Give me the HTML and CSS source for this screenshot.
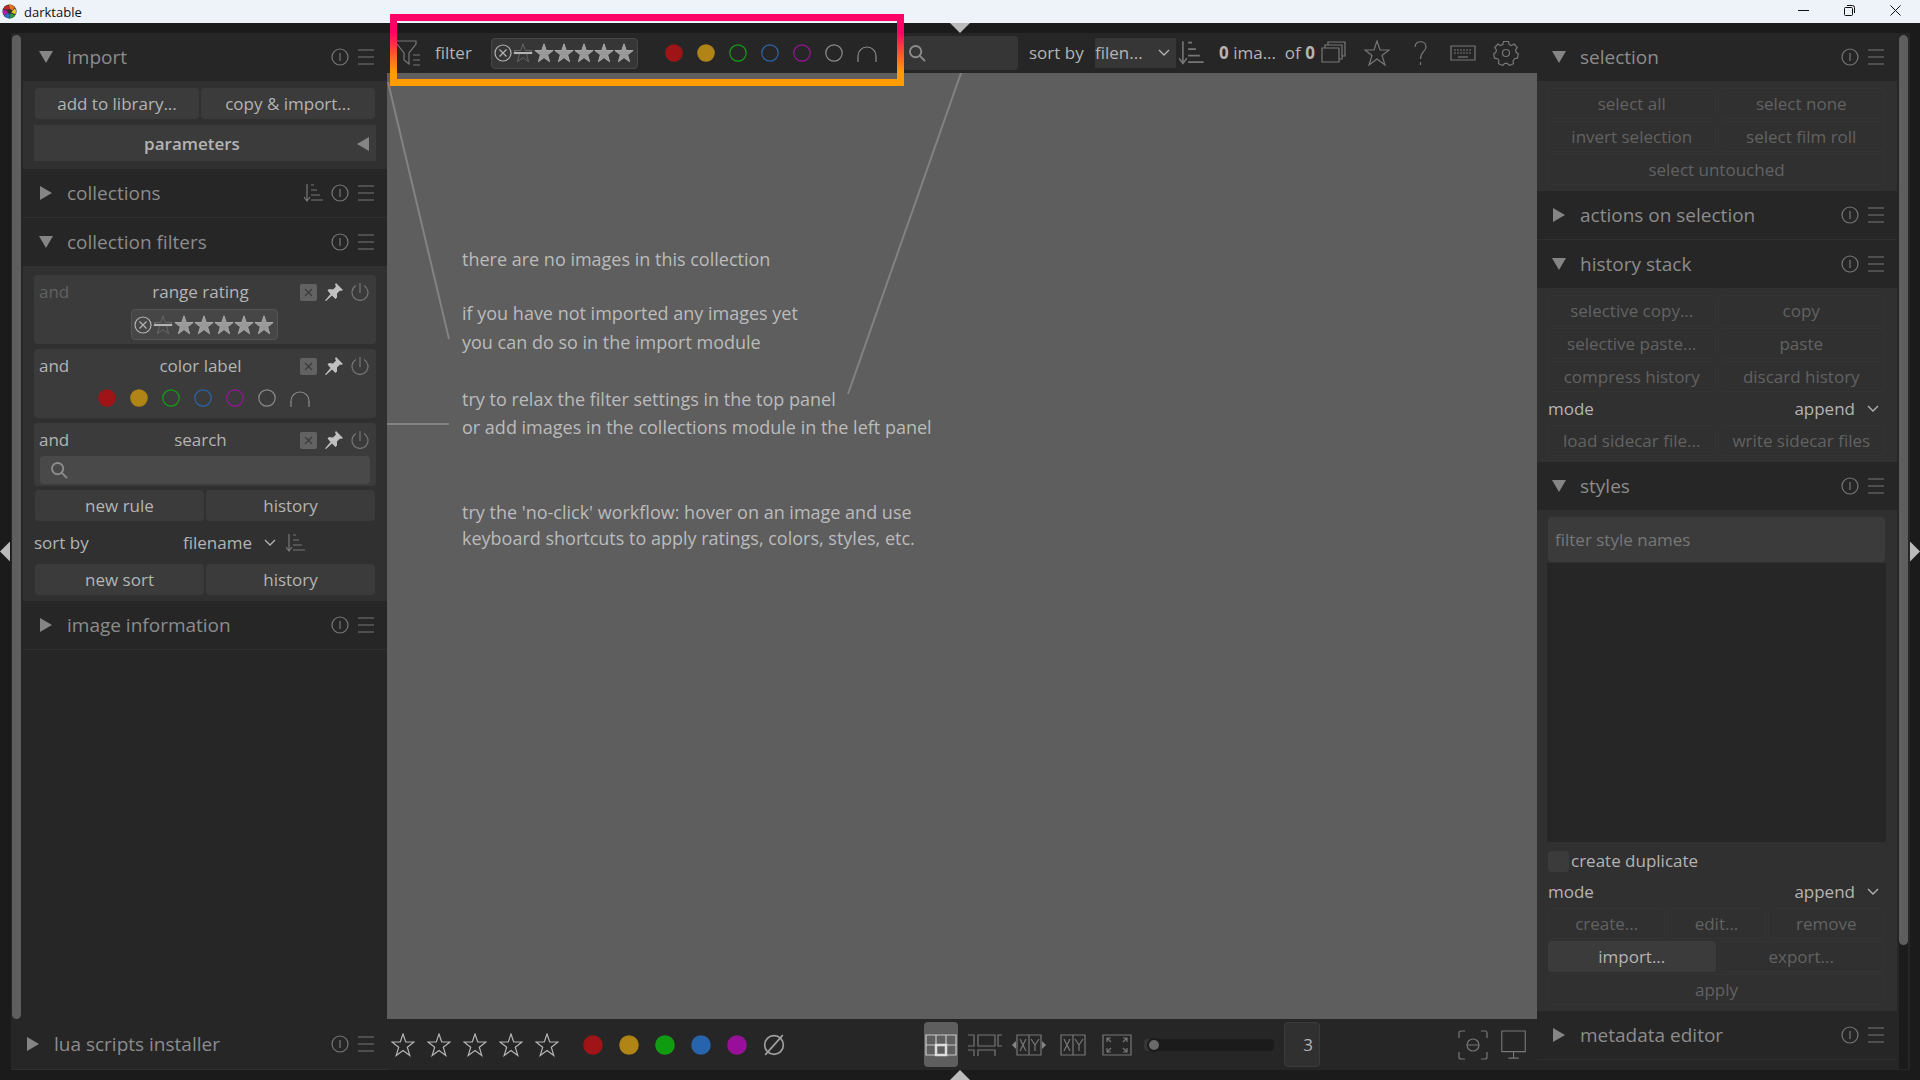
FILE: index.html
```
<!DOCTYPE html>
<html lang="en">
<head>
  <meta charset="UTF-8">
  <title>darktable</title>
  <link rel="stylesheet" href="styles.css">
</head>
<body>
  <!-- shared icons -->
  <svg class="sprite" aria-hidden="true">
    <symbol id="reset" viewBox="0 0 18 18"><circle cx="9" cy="9" r="8"/><path d="M9 5v8"/></symbol>
    <symbol id="menu" viewBox="0 0 16 18"><path d="M0 2h16M0 9h16M0 16h16"/></symbol>
    <symbol id="sort" viewBox="0 0 20 18"><path d="M3 0v16M0 13l3 4 3-4M7 1h3M7 6h6M7 11h9M7 16h12"/></symbol>
    <symbol id="down" viewBox="0 0 14 14"><path class="solid" d="M0 1h14L7 13z"/></symbol>
    <symbol id="right" viewBox="0 0 14 14"><path class="solid" d="M1 0v14l12-7z"/></symbol>
    <symbol id="left" viewBox="0 0 14 14"><path class="solid" d="M13 0v14L1 7z"/></symbol>
    <symbol id="star" viewBox="0 0 24 24"><path d="M12 1l2.700 8h8.300l-6.700 5.200 2.500 8.300-6.800-5-6.800 5 2.500-8.300L1 9h8.300z"/></symbol>
    <symbol id="reject" viewBox="0 0 18 18"><circle cx="9" cy="9" r="8"/><path d="M5.500 5.500l7 7M12.500 5.500l-7 7"/></symbol>
    <symbol id="dot" viewBox="0 0 18 18"><circle cx="9" cy="9" r="8.200"/></symbol>
    <symbol id="union" viewBox="0 0 20 18"><path d="M1 18V12a9 9 0 0 1 18 0v6"/></symbol>
    <symbol id="close" viewBox="0 0 17 17"><rect class="box" width="17" height="17" rx="2"/><path d="M5 5l7 7M12 5l-7 7"/></symbol>
    <symbol id="pin" viewBox="0 0 18 18"><path class="solid" d="M11 0l7 7-2 1-1-.5-3 3 0 4-1.500 1.500-3.500-3.500L1 18 0 17.500l5.500-6.500L2.500 7.500 4 6l4 .5 3-3L10 1.500z"/></symbol>
    <symbol id="power" viewBox="0 0 18 18"><path d="M9 0v10M5 2.500a8 8 0 1 0 8 0"/></symbol>
    <symbol id="search" viewBox="0 0 18 18"><circle cx="7" cy="7" r="6"/><path d="M11.500 11.500L17 17"/></symbol>
  </svg>

  <header class="titlebar">
    <svg class="app-icon" viewBox="0 0 16 16">
      <circle cx="8" cy="8" r="7.500" fill="#333"/>
      <path fill="#c8232c" d="M1.500 5A7.500 7.500 0 0 1 6 1l3 4-4 1z"/>
      <path fill="#e8761d" d="M7 .5a7.500 7.500 0 0 1 6.500 3L11 7 8.500 5z"/>
      <path fill="#e8cf1d" d="M14 4.500a7.500 7.500 0 0 1 .5 6.500L10 9l1.500-2z"/>
      <path fill="#2e9b3a" d="M14 12a7.500 7.500 0 0 1-5 3.500L8 11l2-1z"/>
      <path fill="#2473d0" d="M8 15.500a7.500 7.500 0 0 1-5.500-3L6 9.500 8 11z"/>
      <path fill="#b41fb0" d="M2 12a7.500 7.500 0 0 1-1-6l4.500 1.500.5 2z"/>
    </svg>
    <span class="app-name">darktable</span>
    <button class="win-btn" aria-label="minimize"><svg viewBox="0 0 11 11"><path d="M0 5.500h11"/></svg></button>
    <button class="win-btn" aria-label="restore"><svg viewBox="0 0 11 11"><rect x=".5" y="2.500" width="8" height="8" rx="1"/><path d="M3 .5h5.500a2 2 0 0 1 2 2V8"/></svg></button>
    <button class="win-btn" aria-label="close"><svg viewBox="0 0 11 11"><path d="M.5.5l10 10M10.500.5l-10 10"/></svg></button>
  </header>

  <main class="frame">
    <i class="edge edge-top"></i>
    <i class="edge edge-left"></i>
    <i class="edge edge-right"></i>
    <i class="edge edge-bottom"></i>

    <!-- left panel -->
    <aside class="panel left">
      <div class="scroller">
        <div class="scrollbar"><div class="thumb"></div></div>
        <div class="modules">
          <section>
            <h2 class="head"><svg class="tri"><use href="#down"/></svg><span>import</span><button aria-label="reset"><svg class="i18"><use href="#reset"/></svg></button><button aria-label="presets"><svg class="i16"><use href="#menu"/></svg></button></h2>
            <div class="body">
              <div class="btns import-btns"><button class="btn">add to library...</button><button class="btn">copy &amp; import...</button></div>
              <button class="params"><b>parameters</b><svg class="tri"><use href="#left"/></svg></button>
            </div>
          </section>
          <section>
            <h2 class="head closed"><svg class="tri"><use href="#right"/></svg><span>collections</span><button aria-label="sort"><svg class="i20"><use href="#sort"/></svg></button><button aria-label="reset"><svg class="i18"><use href="#reset"/></svg></button><button aria-label="presets"><svg class="i16"><use href="#menu"/></svg></button></h2>
          </section>
          <section>
            <h2 class="head"><svg class="tri"><use href="#down"/></svg><span>collection filters</span><button aria-label="reset"><svg class="i18"><use href="#reset"/></svg></button><button aria-label="presets"><svg class="i16"><use href="#menu"/></svg></button></h2>
            <div class="body filters">
              <div class="rule">
                <div class="rule-head"><span class="dim">and</span><span class="name">range rating</span><button aria-label="remove"><svg class="i17 x"><use href="#close"/></svg></button><button aria-label="pin"><svg class="i18 pin"><use href="#pin"/></svg></button><button aria-label="off"><svg class="i18"><use href="#power"/></svg></button></div>
                <div class="rating">
                  <svg class="i18 rej"><use href="#reject"/></svg>
                  <svg class="st zero" viewBox="0 0 24 24"><use href="#star"/><path class="bar" d="M1 12h22"/></svg>
                  <svg class="st"><use href="#star"/></svg><svg class="st"><use href="#star"/></svg><svg class="st"><use href="#star"/></svg><svg class="st"><use href="#star"/></svg><svg class="st"><use href="#star"/></svg>
                </div>
              </div>
              <div class="rule">
                <div class="rule-head"><span>and</span><span class="name">color label</span><button aria-label="remove"><svg class="i17 x"><use href="#close"/></svg></button><button aria-label="pin"><svg class="i18 pin"><use href="#pin"/></svg></button><button aria-label="off"><svg class="i18"><use href="#power"/></svg></button></div>
                <div class="labels">
                  <button aria-label="red"><svg class="i18 red on"><use href="#dot"/></svg></button>
                  <button aria-label="yellow"><svg class="i18 yellow on"><use href="#dot"/></svg></button>
                  <button aria-label="green"><svg class="i18 green"><use href="#dot"/></svg></button>
                  <button aria-label="blue"><svg class="i18 blue"><use href="#dot"/></svg></button>
                  <button aria-label="purple"><svg class="i18 purple"><use href="#dot"/></svg></button>
                  <button aria-label="none"><svg class="i18 none"><use href="#dot"/></svg></button>
                  <button aria-label="union"><svg class="i20 none"><use href="#union"/></svg></button>
                </div>
              </div>
              <div class="rule">
                <div class="rule-head"><span>and</span><span class="name">search</span><button aria-label="remove"><svg class="i17 x"><use href="#close"/></svg></button><button aria-label="pin"><svg class="i18 pin"><use href="#pin"/></svg></button><button aria-label="off"><svg class="i18"><use href="#power"/></svg></button></div>
                <label class="search"><svg class="mag"><use href="#search"/></svg><input type="text" aria-label="search"></label>
              </div>
              <div class="btns"><button class="btn">new rule</button><button class="btn">history</button></div>
              <div class="sort-row"><label for="sort-left">sort by</label><select id="sort-left" class="combo"><option>filename</option></select><button aria-label="order"><svg class="i20"><use href="#sort"/></svg></button></div>
              <div class="btns"><button class="btn">new sort</button><button class="btn">history</button></div>
            </div>
          </section>
          <section>
            <h2 class="head closed"><svg class="tri"><use href="#right"/></svg><span>image information</span><button aria-label="reset"><svg class="i18"><use href="#reset"/></svg></button><button aria-label="presets"><svg class="i16"><use href="#menu"/></svg></button></h2>
          </section>
        </div>
      </div>
      <h2 class="head closed lua"><svg class="tri"><use href="#right"/></svg><span>lua scripts installer</span><button aria-label="reset"><svg class="i18"><use href="#reset"/></svg></button><button aria-label="presets"><svg class="i16"><use href="#menu"/></svg></button></h2>
    </aside>

    <!-- lighttable -->
    <div class="center">
      <div class="toolbar">
        <div class="filter-group">
          <svg class="funnel" viewBox="0 0 26 28"><path d="M1 2h19v3l-7 9v11l-5-4v-7L1 5M17 16h7M17 21h7M17 26h7"/></svg>
          <span class="filter-text">filter</span>
          <div class="rating">
            <svg class="i18 rej"><use href="#reject"/></svg>
            <svg class="st zero" viewBox="0 0 24 24"><use href="#star"/><path class="bar" d="M1 12h22"/></svg>
            <svg class="st"><use href="#star"/></svg><svg class="st"><use href="#star"/></svg><svg class="st"><use href="#star"/></svg><svg class="st"><use href="#star"/></svg><svg class="st"><use href="#star"/></svg>
          </div>
          <div class="labels">
            <button aria-label="red"><svg class="i18 red on"><use href="#dot"/></svg></button>
            <button aria-label="yellow"><svg class="i18 yellow on"><use href="#dot"/></svg></button>
            <button aria-label="green"><svg class="i18 green"><use href="#dot"/></svg></button>
            <button aria-label="blue"><svg class="i18 blue"><use href="#dot"/></svg></button>
            <button aria-label="purple"><svg class="i18 purple"><use href="#dot"/></svg></button>
            <button aria-label="none"><svg class="i18 none"><use href="#dot"/></svg></button>
            <button aria-label="union"><svg class="i20 none"><use href="#union"/></svg></button>
          </div>
          <div class="highlight"></div>
        </div>
        <label class="search"><svg class="mag"><use href="#search"/></svg><input type="text" aria-label="search"></label>
        <label class="sort-label" for="sort-top">sort by</label>
        <select id="sort-top" class="combo"><option>filen...</option></select>
        <button aria-label="order"><svg class="sort-big"><use href="#sort"/></svg></button>
        <span class="count"><b>0</b> ima...&nbsp; of <b>0</b></span>
        <div class="tools">
          <button aria-label="group"><svg viewBox="0 0 26 26"><path d="M1 8h17v14H1zM4 8V5h17v14h-3M7 5V2h17v14h-3"/></svg></button>
          <button aria-label="overlays"><svg viewBox="0 0 26 26"><path d="M13 1l3 9h9l-7 5.500 3 9.500-8-6-8 6 3-9.500L1 10h9z"/></svg></button>
          <button aria-label="help"><svg viewBox="0 0 26 26"><path d="M8 7c0-7 11-7 11 0 0 5-5.500 4-5.500 12M13.500 22v3"/></svg></button>
          <button aria-label="shortcuts"><svg viewBox="0 0 26 26"><path d="M1 6h24v14H1z"/><path stroke-dasharray="2 1" d="M4 10h18M4 13h18"/><path d="M8 17h10"/></svg></button>
          <button aria-label="preferences"><svg viewBox="0 0 26 26"><circle cx="13" cy="13" r="3.500"/><path d="M10.500 1.500h5l.7 3 2.200 1 2.800-1.500 3 3.500-1.700 2.500.8 2.500 2 1.200-.8 4.500-3 .5-1.400 2 .4 3-4.200 1.800-2-2.200h-2.600l-2 2.200-4.200-1.800.4-3-1.400-2-3-.5-.8-4.500 2-1.200.8-2.500-1.700-2.500 3-3.500 2.800 1.500 2.200-1z"/></svg></button>
        </div>
      </div>

      <div class="canvas">
        <svg class="guides"><path d="M1 9l61 257M574 0L461 321M0 351h62"/></svg>
        <p class="one">there are no images in this collection</p>
        <p class="two">if you have not imported any images yet<br>you can do so in the import module</p>
        <p class="three">try to relax the filter settings in the top panel<br>or add images in the collections module in the left panel</p>
        <p class="four">try the 'no-click' workflow: hover on an image and use<br>keyboard shortcuts to apply ratings, colors, styles, etc.</p>
      </div>

      <div class="bottombar">
        <div class="stars">
          <button aria-label="1 star"><svg><use href="#star"/></svg></button>
          <button aria-label="2 stars"><svg><use href="#star"/></svg></button>
          <button aria-label="3 stars"><svg><use href="#star"/></svg></button>
          <button aria-label="4 stars"><svg><use href="#star"/></svg></button>
          <button aria-label="5 stars"><svg><use href="#star"/></svg></button>
        </div>
        <div class="colors">
          <button aria-label="red"><svg class="red on"><use href="#dot"/></svg></button>
          <button aria-label="yellow"><svg class="yellow on"><use href="#dot"/></svg></button>
          <button aria-label="green"><svg class="green on"><use href="#dot"/></svg></button>
          <button aria-label="blue"><svg class="blue on"><use href="#dot"/></svg></button>
          <button aria-label="purple"><svg class="purple on"><use href="#dot"/></svg></button>
          <button aria-label="clear"><svg class="clear" viewBox="0 0 20 20"><circle cx="10" cy="10" r="8.500"/><path d="M2 19L18 1"/></svg></button>
        </div>
        <div class="layouts">
          <button class="active" aria-label="filemanager"><svg viewBox="0 0 34 24"><path d="M2 2h30v20H2zM2 12h30M12 2v20M22 2v20"/><path class="thick" d="M12 12h10v10H12z"/></svg></button>
          <button aria-label="zoomable"><svg viewBox="0 0 34 24"><path d="M0 2h6v11H0M10 2h17v11H10zM34 2h-4v11h4M0 17h6v6M10 23v-6h17v6"/></svg></button>
          <button aria-label="culling"><svg viewBox="0 0 34 24"><path d="M5 2h12v20H5zM17 2h12v20H17zM8 6l6 12M14 6L8 18M19 6l4 6 4-6M23 12v6"/><path class="solid" d="M4 8v8l-4-4zM30 8v8l4-4z"/></svg></button>
          <button aria-label="culling dynamic"><svg class="w26" viewBox="4 0 26 24"><path d="M5 2h12v20H5zM17 2h12v20H17zM8 6l6 12M14 6L8 18M19 6l4 6 4-6M23 12v6"/></svg></button>
          <button aria-label="preview"><svg class="w30" viewBox="0 0 30 24"><path d="M1 2h28v20H1zM5 9V5h4M5 5l4 4M25 9V5h-4M25 5l-4 4M5 15v4h4M5 19l4-4M25 15v4h-4M25 19l-4-4"/></svg></button>
        </div>
        <input class="zoom" type="range" min="0" max="120" value="3" aria-label="images per row">
        <input class="per-row" type="text" value="3" aria-label="images per row value">
        <div class="display">
          <button aria-label="focus peaking"><svg viewBox="0 0 30 30"><path d="M1 8V3q0-2 2-2h4M23 1h4q2 0 2 2v5M29 22v5q0 2-2 2h-4M7 29H3q-2 0-2-2v-5M9 15h12"/><circle cx="15" cy="15" r="6"/></svg></button>
          <button aria-label="display profile"><svg viewBox="0 0 28 32"><path d="M1 1h25v22H1zM13.500 23v7M8 30h11"/></svg></button>
        </div>
      </div>
    </div>

    <!-- right panel -->
    <aside class="panel right">
      <div class="modules">
        <section>
          <h2 class="head"><svg class="tri"><use href="#down"/></svg><span>selection</span><button aria-label="reset"><svg class="i18"><use href="#reset"/></svg></button><button aria-label="presets"><svg class="i16"><use href="#menu"/></svg></button></h2>
          <div class="body">
            <div class="btns"><button class="btn" disabled>select all</button><button class="btn" disabled>select none</button></div>
            <div class="btns"><button class="btn" disabled>invert selection</button><button class="btn" disabled>select film roll</button></div>
            <div class="btns"><button class="btn" disabled>select untouched</button></div>
          </div>
        </section>
        <section>
          <h2 class="head closed"><svg class="tri"><use href="#right"/></svg><span>actions on selection</span><button aria-label="reset"><svg class="i18"><use href="#reset"/></svg></button><button aria-label="presets"><svg class="i16"><use href="#menu"/></svg></button></h2>
        </section>
        <section>
          <h2 class="head"><svg class="tri"><use href="#down"/></svg><span>history stack</span><button aria-label="reset"><svg class="i18"><use href="#reset"/></svg></button><button aria-label="presets"><svg class="i16"><use href="#menu"/></svg></button></h2>
          <div class="body">
            <div class="btns"><button class="btn" disabled>selective copy...</button><button class="btn" disabled>copy</button></div>
            <div class="btns"><button class="btn" disabled>selective paste...</button><button class="btn" disabled>paste</button></div>
            <div class="btns"><button class="btn" disabled>compress history</button><button class="btn" disabled>discard history</button></div>
            <div class="mode"><label for="mode-history">mode</label><select id="mode-history" class="combo"><option>append</option></select></div>
            <div class="btns"><button class="btn" disabled>load sidecar file...</button><button class="btn" disabled>write sidecar files</button></div>
          </div>
        </section>
        <section>
          <h2 class="head"><svg class="tri"><use href="#down"/></svg><span>styles</span><button aria-label="reset"><svg class="i18"><use href="#reset"/></svg></button><button aria-label="presets"><svg class="i16"><use href="#menu"/></svg></button></h2>
          <div class="body">
            <input class="style-filter" type="text" placeholder="filter style names" aria-label="filter style names">
            <div class="style-list"></div>
            <label class="check"><input type="checkbox">create duplicate</label>
            <div class="mode"><label for="mode-styles">mode</label><select id="mode-styles" class="combo"><option>append</option></select></div>
            <div class="btns three-btns"><button class="btn" disabled>create...</button><button class="btn" disabled>edit...</button><button class="btn" disabled>remove</button></div>
            <div class="btns"><button class="btn">import...</button><button class="btn" disabled>export...</button></div>
            <div class="btns"><button class="btn" disabled>apply</button></div>
          </div>
        </section>
        <section>
          <h2 class="head closed"><svg class="tri"><use href="#right"/></svg><span>metadata editor</span><button aria-label="reset"><svg class="i18"><use href="#reset"/></svg></button><button aria-label="presets"><svg class="i16"><use href="#menu"/></svg></button></h2>
        </section>
      </div>
      <div class="scrollbar"><div class="thumb"></div></div>
    </aside>
  </main>
</body>
</html>
```
FILE: styles.css
```
* {
  box-sizing: border-box;
}
body {
  margin: 0;
  height: 100vh;
  display: flex;
  flex-direction: column;
  overflow: hidden;
  background: #1b1b1b;
  color: #b4b4b4;
  font-family: "Open Sans", "Noto Sans", sans-serif;
  font-size: 17px;
  line-height: 24px;
}
button, input, select {
  font: inherit;
  color: inherit;
  border: 0;
  padding: 0;
  margin: 0;
  background: none;
}
svg {
  display: block;
  fill: none;
  stroke: #777;
  stroke-width: 1.2;
  flex: none;
}
.sprite {
  position: absolute;
  width: 0;
  height: 0;
}
.solid {
  fill: #858585;
  stroke: none;
}
.i16 { width: 16px; height: 18px; }
.i17 { width: 17px; height: 17px; }
.i18 { width: 18px; height: 18px; }
.i20 { width: 20px; height: 18px; }
.tri { width: 14px; height: 14px; }

/* title bar */
.titlebar {
  display: flex;
  align-items: center;
  height: 23px;
  flex: none;
  background: #eef3fa;
  color: #111;
  font-size: 13px;
}
.app-icon {
  width: 15px;
  height: 15px;
  margin: 0 7px 0 2px;
  stroke: none;
}
.app-name {
  flex: 1;
}
.win-btn {
  width: 46px;
  height: 20px;
  display: grid;
  place-items: center;
  align-self: flex-start;
}
.win-btn svg {
  width: 11px;
  height: 11px;
  stroke: #111;
  stroke-width: 1;
}
.win-btn:last-child {
  margin-right: 2px;
}

/* window frame */
.frame {
  position: relative;
  flex: 1;
  min-height: 0;
  display: grid;
  grid-template-columns: 376px 1fr 373px;
  padding: 10px 10px 10px 11px;
}
.edge {
  position: absolute;
  background: #bbb;
}
.edge-top, .edge-bottom {
  left: 50%;
  margin-left: -10px;
  width: 20px;
  height: 10px;
}
.edge-left, .edge-right {
  top: 50%;
  margin-top: -10px;
  width: 10px;
  height: 20px;
}
.edge-top { top: 0; clip-path: polygon(0 0, 100% 0, 50% 100%); }
.edge-bottom { bottom: 0; clip-path: polygon(0 100%, 100% 100%, 50% 0); }
.edge-left { left: 0; clip-path: polygon(100% 0, 100% 100%, 0 50%); }
.edge-right { right: 0; clip-path: polygon(0 0, 0 100%, 100% 50%); }

/* side panels */
.panel {
  background: #262626;
  min-height: 0;
  display: flex;
}
.left {
  flex-direction: column;
}
.scroller {
  flex: 1;
  display: flex;
  min-height: 0;
}
.modules {
  flex: 1;
  min-width: 0;
}
.scrollbar {
  width: 12px;
  padding: 2px 2px 0 1px;
}
.thumb {
  height: 100%;
  border-radius: 5px;
  background: #5e5e5e;
}
.right .scrollbar {
  width: 13px;
  padding: 2px 2px 1px;
  background: linear-gradient(#1b1b1b, #1b1b1b) 2px 2px / 9px calc(100% - 3px) no-repeat;
}
.right .thumb {
  height: 88%;
}
.head {
  display: flex;
  align-items: center;
  height: 48px;
  margin: 0;
  padding: 0 13px 0 16px;
  font-size: 19px;
  font-weight: 400;
  color: #8c8c8c;
}
.head span {
  flex: 1;
  margin-left: 14px;
}
.head button {
  margin-left: 9px;
}
.head button:has(.i20) {
  margin-right: -2px;
}
.closed {
  height: 49px;
  border-bottom: 1px solid #303030;
}
.lua {
  height: 51px;
  padding-left: 15px;
}
.body {
  padding: 7px 12px 6px;
  background: #303030;
  display: flex;
  flex-direction: column;
  gap: 2px;
}
.left .body {
  padding: 7px 11px 6px;
}
.btns {
  display: grid;
  grid-auto-flow: column;
  grid-auto-columns: 1fr;
  gap: 2px;
}
.left .btns {
  margin: 0 1px;
}
.import-btns {
  grid-template-columns: 164fr 174fr;
}
.three-btns {
  grid-template-columns: 117fr 98fr 117fr;
}
.btn {
  height: 31px;
  padding-top: 1px;
  border-radius: 4px;
  background: #3b3b3b;
  white-space: nowrap;
}
.btn:disabled {
  background: none;
  border: 1px solid #343434;
  color: #626262;
}
.params {
  display: flex;
  align-items: center;
  height: 36px;
  margin: 4px 0 2px;
  padding: 1px 6px 0;
  background: #3b3b3b;
}
.params b {
  flex: 1;
  padding-right: 12px;
  font-weight: 600;
}

/* collection filters */
.left .filters {
  padding-top: 9px;
}
.rule {
  height: 69px;
  margin-bottom: 3px;
  padding: 4px 7px 3px 5px;
  border-radius: 4px;
  background: #3b3b3b;
}
.filters .rule + .btns {
  margin-top: -1px;
}
.rule-head {
  display: grid;
  grid-template-columns: 66px 1fr 17px 18px 18px;
  column-gap: 8px;
  align-items: center;
  height: 26px;
}
.rule-head .name {
  padding-right: 4px;
  text-align: center;
}
.dim {
  color: #626262;
}
.x {
  stroke: #3b3b3b;
}
.box {
  fill: #626262;
  stroke: none;
}
#pin .solid {
  fill: #c0c0c0;
}
.rating {
  display: flex;
  align-items: center;
  width: 147px;
  height: 31px;
  padding: 0 1px 0 2px;
  border: 1px solid #555;
  border-radius: 4px;
  background: #464646;
}
.rule .rating {
  margin: 4px auto 0 92px;
}
.rating .rej {
  stroke: #b4b4b4;
}
.st {
  width: 20px;
  height: 20px;
  fill: #999;
  stroke: #a8a8a8;
}
.zero {
  width: 22px;
  fill: none;
  stroke: #666;
}
.bar {
  stroke: #b4b4b4;
  stroke-width: 2.5;
}
.labels {
  display: flex;
  align-items: center;
  gap: 14px;
}
.rule .labels {
  margin: 10px 0 0 59px;
}
.red { stroke: #9f1517; }
.yellow { stroke: #b08415; }
.green { stroke: #159f15; }
.blue { stroke: #2b65a8; }
.purple { stroke: #991499; }
.none { stroke: #8c8c8c; }
.red.on { fill: #9f1517; }
.yellow.on { fill: #b08415; }
.green.on { fill: #109c10; }
.blue.on { fill: #2665ad; }
.purple.on { fill: #990f99; }
.search {
  display: flex;
  align-items: center;
  height: 28px;
  margin: 3px -1px 0 1px;
  padding: 0 11px;
  border-radius: 4px;
  background: #494949;
}
.search input {
  flex: 1;
  min-width: 0;
}
.rule:has(.search) {
  height: 63px;
}
.mag {
  width: 17px;
  height: 17px;
  stroke: #8c8c8c;
  stroke-width: 2;
}
.combo {
  appearance: none;
  height: 30px;
  padding-right: 30px;
  text-align: right;
  background: url("data:image/svg+xml,%3Csvg xmlns='http://www.w3.org/2000/svg' width='12' height='8'%3E%3Cpath d='M1 1l5 5 5-5' fill='none' stroke='%23b4b4b4' stroke-width='1.3'/%3E%3C/svg%3E") no-repeat right 6px center;
}
.sort-row {
  display: flex;
  align-items: center;
  height: 39px;
}
.sort-row .combo {
  width: 192px;
  margin-right: 4px;
}
.sort-row label {
  width: 56px;
  white-space: nowrap;
}

/* center */
.center {
  display: flex;
  flex-direction: column;
  min-width: 0;
}
.toolbar {
  position: relative;
  z-index: 1;
  display: flex;
  align-items: center;
  height: 40px;
  background: #262626;
}
.filter-group {
  position: relative;
  display: flex;
  align-items: center;
  width: 516px;
  height: 40px;
  padding-left: 9px;
}
.funnel {
  width: 26px;
  height: 28px;
}
.filter-text {
  width: 56px;
  margin-left: 13px;
}
.toolbar .rating {
  background: #363636;
  border-color: #484848;
}
.toolbar .labels {
  margin-left: 27px;
}
/* frame around the filter controls */
.highlight {
  position: absolute;
  inset: -19px -1px -13px 3px;
  border: 7px solid;
  border-image: linear-gradient(#ff0066 25%, #ff9d00 80%) 7;
  pointer-events: none;
}
.toolbar .search {
  width: 115px;
  height: 34px;
  margin: 0;
  padding: 0 6px;
  background: #363636;
}
.sort-label {
  width: 66px;
  margin-left: 11px;
}
.toolbar .combo {
  width: 81px;
  padding-right: 22px;
  text-align: left;
  background-color: #363636;
}
.sort-big {
  width: 26px;
  height: 24px;
  margin-left: 3px;
}
.count {
  width: 102px;
  margin-left: 14px;
  white-space: nowrap;
}
.count b {
  font-weight: 700;
}
.tools {
  display: flex;
  gap: 17px;
}
.tools svg {
  width: 26px;
  height: 26px;
}
.canvas {
  position: relative;
  flex: 1;
  min-height: 0;
  padding: 172px 0 0 75px;
  background: #5e5e5e;
  color: #bbb;
  font-size: 18px;
}
.guides {
  position: absolute;
  inset: 0;
  width: 100%;
  height: 100%;
  stroke: #828282;
  stroke-width: 2;
}
.canvas p {
  position: relative;
  margin: 0;
  line-height: 28px;
}
.canvas .one {
  margin-bottom: 26px;
}
.canvas .two {
  margin-bottom: 28px;
  line-height: 29px;
}
.canvas .three {
  margin-bottom: 58px;
}
.canvas .four {
  line-height: 26px;
}

/* bottom bar */
.bottombar {
  display: flex;
  align-items: center;
  height: 51px;
  padding: 0 9px 0 4px;
  background: #262626;
}
.stars, .colors {
  display: flex;
  gap: 12px;
}
.stars svg {
  width: 24px;
  height: 24px;
  stroke: #b4b4b4;
}
.colors {
  gap: 16px;
  margin-left: 24px;
}
.colors svg {
  width: 20px;
  height: 20px;
}
.colors .clear {
  width: 22px;
  height: 22px;
  stroke: #a0a0a0;
  stroke-width: 1.5;
}
.layouts {
  display: flex;
  align-items: center;
  gap: 10px;
  margin-left: 139px;
}
.layouts svg {
  width: 34px;
  height: 24px;
}
.layouts .w26 {
  width: 26px;
  margin: 0 6px 0 4px;
}
.layouts .w30 {
  width: 30px;
}
.layouts .active {
  height: 45px;
  border-radius: 4px;
  background: #5e5e5e;
}
.active svg {
  stroke: #c8c8c8;
}
.thick {
  stroke: #ddd;
  stroke-width: 2.5;
}
.zoom {
  appearance: none;
  width: 130px;
  height: 12px;
  margin-left: 12px;
  border-radius: 4px;
  background: linear-gradient(90deg, #363636 8px, #1b1b1b 8px);
}
.zoom::-webkit-slider-thumb {
  appearance: none;
  width: 14px;
  height: 14px;
  border: 2px solid #1b1b1b;
  border-radius: 50%;
  background: #6a6a6a;
}
.per-row {
  width: 36px;
  height: 45px;
  margin-left: 10px;
  padding-right: 6px;
  border: 1px solid #3b3b3b;
  border-radius: 4px;
  background: #303030;
  text-align: right;
}
.display {
  display: flex;
  align-items: center;
  gap: 12px;
  margin-left: auto;
}
.display svg {
  width: 30px;
  height: 30px;
}
.display button + button svg {
  width: 28px;
}

/* right panel modules */
.right .head {
  padding: 0 13px 0 15px;
}
.right .body {
  padding-left: 11px;
}
.mode {
  display: flex;
  align-items: center;
  height: 29px;
}
.mode label {
  flex: 1;
}
.style-filter {
  height: 45px;
  padding: 0 7px;
  border-radius: 4px;
  background: #3b3b3b;
}
.style-filter::placeholder {
  color: #777;
  opacity: 1;
}
.style-list {
  height: 279px;
  margin: -1px -1px 0;
  background: #262626;
}
.check {
  display: flex;
  align-items: center;
  gap: 2px;
  height: 30px;
  margin-top: 2px;
}
.check + .mode {
  height: 28px;
}
.check input {
  appearance: none;
  width: 21px;
  height: 21px;
  border-radius: 4px;
  background: #3b3b3b;
}
```
